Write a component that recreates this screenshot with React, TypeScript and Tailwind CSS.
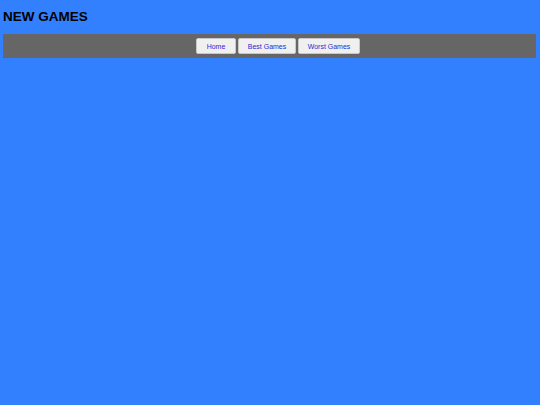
export default function App() {
  const links = [
    { label: 'Home', width: 'w-[40px]' },
    { label: 'Best Games', width: 'w-[58px]' },
    { label: 'Worst Games', width: 'w-[62px]' },
  ];

  return (
    <div className="min-h-[405px] bg-[#3380ff] font-['Liberation_Sans',Arial,sans-serif]">
      <h1 className="px-[3px] pt-[9px] text-[13.5px] font-bold leading-[16px] text-black">NEW GAMES</h1>
      <nav className="ml-[3px] mr-[4px] mt-[9px] flex h-[24px] items-center justify-center gap-[2px] bg-[#666666] pl-[17px]">
        {links.map((link) => (
          <button
            key={link.label}
            className={`${link.width} h-[16px] rounded-[2px] border border-[#c8c8c8] bg-[#f0f0f0] text-[7px] leading-none text-[#2a2ad0]`}
          >
            {link.label}
          </button>
        ))}
      </nav>
    </div>
  );
}
